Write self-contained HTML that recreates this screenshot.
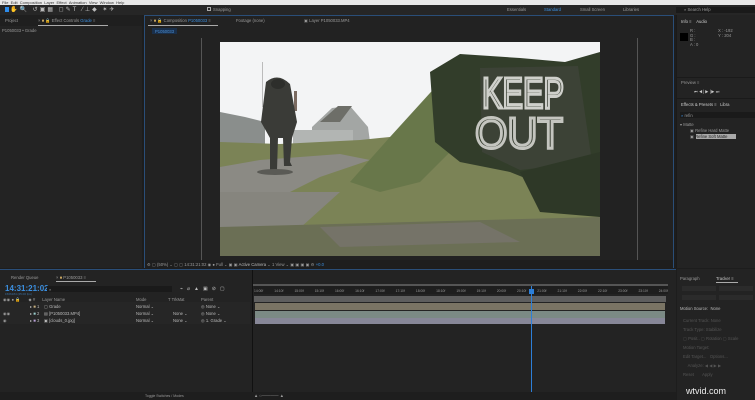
<!DOCTYPE html>
<html><head><style>
*{margin:0;padding:0;box-sizing:border-box}
body{width:755px;height:400px;background:#1d1d1d;font-family:"Liberation Sans",sans-serif;font-size:4px;color:#a0a0a0;position:relative;overflow:hidden}
.a{position:absolute}
.t{position:absolute;white-space:nowrap;font-size:4.2px;color:#9a9a9a}
.rl{position:absolute;left:254px;top:289px;width:414px;display:flex;justify-content:space-between;font-size:3.3px;color:#999}
</style></head><body>
<div class="a" style="left:0;top:0;width:755px;height:5px;background:#e8e8e8"></div>
<div class="t" style="left:2px;top:0;color:#333;font-size:4px">File&nbsp;&nbsp;Edit&nbsp;&nbsp;Composition&nbsp;&nbsp;Layer&nbsp;&nbsp;Effect&nbsp;&nbsp;Animation&nbsp;&nbsp;View&nbsp;&nbsp;Window&nbsp;&nbsp;Help</div>
<div class="a" style="left:0;top:5px;width:755px;height:10px;background:#262626"></div>
<div class="t" style="left:5px;top:6px;color:#bbb;font-size:6px;letter-spacing:2px">▸✋🔍 ↺▣▦ ◻✎T ⁄⊥◆ ✶✈</div>
<div class="a" style="left:5px;top:7px;width:4px;height:5px;background:#2d8ceb"></div>
<div class="a" style="left:207px;top:7px;width:4px;height:4px;border:1px solid #aaa"></div>
<div class="t" style="left:213px;top:7px">Snapping</div>
<div class="t" style="left:507px;top:7px">Essentials</div>
<div class="t" style="left:544px;top:7px;color:#3b8fe0">Standard</div>
<div class="t" style="left:580px;top:7px">Small Screen</div>
<div class="t" style="left:623px;top:7px">Libraries</div>
<div class="a" style="left:676px;top:7px;width:79px;height:6px;background:#1a1a1a"></div>
<div class="t" style="left:684px;top:7px">⌕ Search Help</div>
<div class="a" style="left:0;top:15px;width:142px;height:253px;background:#232323"></div>
<div class="a" style="left:0;top:15px;width:142px;height:11px;background:#1f1f1f"></div>
<div class="t" style="left:5px;top:18px">Project</div>
<div class="t" style="left:38px;top:18px">× <span style="color:#c8a560">■</span> 🔒 Effect Controls <span style="color:#3b8fe0">Grade</span> ≡</div>
<div class="a" style="left:38px;top:25px;width:70px;height:1px;background:#aaa"></div>
<div class="t" style="left:2px;top:28px">P1050033 • Grade</div>
<div class="a" style="left:144px;top:15px;width:530px;height:253px;background:#222;border:1px solid #2a4e78"></div>
<div class="t" style="left:150px;top:18px">× <span style="color:#c8a560">■</span> 🔒 Composition <span style="color:#3b8fe0">P1050033</span> ≡</div>
<div class="a" style="left:148px;top:25px;width:70px;height:1px;background:#aaa"></div>
<div class="t" style="left:236px;top:18px">Footage (none)</div>
<div class="t" style="left:304px;top:18px">▣ Layer P1050033.MP4</div>
<div class="a" style="left:152px;top:28px;width:25px;height:6px;background:#1a2f4a"></div>
<div class="t" style="left:155px;top:29px;color:#4a90d8">P1050033</div>
<div class="a" style="left:201px;top:38px;width:1px;height:222px;background:#555"></div>
<div class="a" style="left:637px;top:38px;width:1px;height:222px;background:#555"></div>
<svg class="a" style="left:220px;top:42px" width="380" height="214" viewBox="0 0 380 214">
<rect width="380" height="214" fill="#f3f4f5"/>
<polygon points="0,70 25,75 45,80 45,105 0,108" fill="#8a8e8c"/>
<polygon points="92,85 112,66 130,64 148,85 150,100 92,103" fill="#a3a6a4"/>
<polygon points="100,80 118,64 132,64 120,80" fill="#6d6e68"/>
<rect x="73" y="88" width="60" height="16" fill="#b2b5b3"/>
<rect x="74" y="49" width="3" height="20" fill="#7a6a60"/>
<rect x="42" y="20" width="1" height="45" fill="#bbb"/>
<polygon points="0,100 60,102 140,98 200,92 212,80 380,70 380,214 0,214" fill="#7b8356"/>
<polygon points="0,125 40,118 120,112 150,118 100,135 40,165 0,175" fill="#8b8a84"/>
<polygon points="0,150 120,150 70,195 0,200" fill="#86857e"/>
<polygon points="0,185 380,175 380,214 0,214" fill="#6b6f55"/>
<polygon points="100,185 260,180 300,200 120,205" fill="#757368"/>
<polygon points="170,95 220,40 230,110 200,140 160,150 130,140" fill="#68774a"/>
<polygon points="210,30 240,12 300,16 345,20 380,10 380,150 340,150 290,130 240,120 215,100" fill="#323d2a"/>
<polygon points="260,26 358,24 372,120 300,128 262,110" fill="#3c4236"/>
<polygon points="300,130 380,110 380,175 320,170" fill="#2e3827"/>
<text x="262" y="66" font-size="44" fill="none" stroke="#cfd0cb" stroke-width="3" font-family="Liberation Sans" textLength="82" lengthAdjust="spacingAndGlyphs">KEEP</text>
<text x="255" y="106" font-size="44" fill="none" stroke="#c4c5bf" stroke-width="3" font-family="Liberation Sans" textLength="88" lengthAdjust="spacingAndGlyphs">OUT</text>
<path d="M46,40 Q58,30 70,42 L77,80 L72,96 L70,120 L72,124 L64,124 L63,96 L58,96 L57,128 L50,128 L50,96 L41,80 Z" fill="#3a3b37"/>
<ellipse cx="58" cy="42" rx="7" ry="5" fill="#2d2e2b"/>
<ellipse cx="55" cy="130" rx="18" ry="3" fill="#5a5a55"/>
</svg>
<div class="a" style="left:145px;top:260px;width:528px;height:8px;background:#1e1e1e"></div>
<div class="t" style="left:147px;top:262px">⚙ ▢ (50%) ⌄ ▢ ▢ 14:31:21:02 ◉ ● Full ⌄ ▣ ▣ <span style="color:#bbb">Active Camera</span> ⌄ 1 View ⌄ ▣ ▣ ▣ ▣ ⚙ <span style="color:#3b8fe0">+0.0</span></div>
<div class="a" style="left:676px;top:15px;width:79px;height:253px;background:#232323;border-left:1px solid #1a1a1a"></div>
<div class="t" style="left:681px;top:19px;color:#ccc">Info ≡&nbsp;&nbsp;&nbsp;&nbsp;Audio</div>
<div class="a" style="left:680px;top:33px;width:8px;height:8px;background:#000"></div>
<div class="t" style="left:690px;top:29px;line-height:4.5px">R :<br>G :<br>B :<br>A : 0</div>
<div class="t" style="left:718px;top:29px;line-height:4.5px">X : -192<br>Y : 204</div>
<div class="a" style="left:676px;top:77px;width:79px;height:1px;background:#1a1a1a"></div>
<div class="t" style="left:681px;top:80px">Preview ≡</div>
<div class="t" style="left:694px;top:89px;color:#ccc">⏮ ◀| ▶ |▶ ⏭</div>
<div class="a" style="left:676px;top:98px;width:79px;height:1px;background:#1a1a1a"></div>
<div class="t" style="left:681px;top:102px;color:#ccc">Effects &amp; Presets ≡&nbsp;&nbsp;&nbsp;Libra</div>
<div class="a" style="left:680px;top:112px;width:75px;height:6px;background:#1a1a1a"></div>
<div class="t" style="left:681px;top:113px"><span style="color:#3b8fe0">⌕</span> refin</div>
<div class="t" style="left:680px;top:122px">▾ Matte</div>
<div class="t" style="left:690px;top:128px">▣ Refine Hard Matte</div>
<div class="a" style="left:696px;top:134px;width:40px;height:5px;background:#a9a9a9"></div>
<div class="t" style="left:690px;top:134px">▣ <span style="color:#222">Refine Soft Matte</span></div>
<div class="a" style="left:0;top:269px;width:676px;height:131px;background:#232323;border-top:1px solid #2a4e78"></div>
<div class="t" style="left:11px;top:275px">Render Queue</div>
<div class="t" style="left:56px;top:275px">× <span style="color:#c8a560">■</span> P1050033 ≡</div>
<div class="a" style="left:56px;top:281px;width:40px;height:1px;background:#aaa"></div>
<div class="t" style="left:5px;top:284px;font-size:8px;color:#3b8fe0;font-weight:bold">14:31:21:02</div>
<div class="t" style="left:5px;top:292px;font-size:3px;color:#3b6fa0">1566184 (25.00 fps)</div>
<div class="a" style="left:47px;top:286px;width:125px;height:6px;background:#1a1a1a"></div>
<div class="t" style="left:49px;top:287px">⌕</div>
<div class="t" style="left:180px;top:286px;color:#bbb;font-size:5px;letter-spacing:4px">⌁⌀▲▣⊘▢</div>
<div class="t" style="left:3px;top:297px">◉◉ ● 🔒&nbsp;&nbsp;&nbsp;&nbsp;&nbsp;&nbsp;&nbsp;◆ #&nbsp;&nbsp;&nbsp;&nbsp;&nbsp;&nbsp;Layer Name</div>
<div class="t" style="left:136px;top:297px">Mode</div><div class="t" style="left:168px;top:297px">T TrkMat</div><div class="t" style="left:201px;top:297px">Parent</div>
<div class="a" style="left:0;top:302px;width:250px;height:22px;background:#262626"></div>
<div class="t" style="left:3px;top:304px;line-height:6.8px">&nbsp;<br>◉◉<br>◉</div>
<div class="t" style="left:30px;top:304px;line-height:6.8px;color:#bbb">▸ <span style="color:#c8b080">■</span> 1&nbsp;&nbsp;&nbsp;&nbsp;▢ Grade<br>▸ <span style="color:#9cc">■</span> 2&nbsp;&nbsp;&nbsp;&nbsp;▤ [P1050033.MP4]<br>▸ <span style="color:#b9a0d8">■</span> 3&nbsp;&nbsp;&nbsp;&nbsp;▣ [clouds_0.jpg]</div>
<div class="t" style="left:136px;top:304px;line-height:6.8px;color:#bbb">Normal ⌄<br>Normal ⌄<br>Normal ⌄</div>
<div class="t" style="left:173px;top:304px;line-height:6.8px;color:#bbb"><br>None ⌄<br>None ⌄</div>
<div class="t" style="left:201px;top:304px;line-height:6.8px;color:#bbb">◎ None ⌄<br>◎ None ⌄<br>◎ 1. Grade ⌄</div>
<div class="a" style="left:252px;top:270px;width:1px;height:122px;background:#111"></div>
<div class="a" style="left:253px;top:284px;width:415px;height:2px;background:#555"></div>
<div class="a" style="left:254px;top:286px;width:414px;height:8px;background:#1e1e1e"></div>
<div class="rl"><span>14:00f</span><span>14:10f</span><span>15:00f</span><span>15:10f</span><span>16:00f</span><span>16:10f</span><span>17:00f</span><span>17:10f</span><span>18:00f</span><span>18:10f</span><span>19:00f</span><span>19:10f</span><span>20:00f</span><span>20:10f</span><span>21:00f</span><span>21:10f</span><span>22:00f</span><span>22:10f</span><span>23:00f</span><span>23:10f</span><span>24:00f</span></div>
<div class="a" style="left:254px;top:296px;width:412px;height:6px;background:#5e5e5e"></div>
<div class="a" style="left:255px;top:303px;width:410px;height:7px;background:#7a7464"></div>
<div class="a" style="left:255px;top:311px;width:410px;height:7px;background:#7b8a85"></div>
<div class="a" style="left:255px;top:318px;width:410px;height:6px;background:#878798"></div>
<div class="a" style="left:531px;top:286px;width:1px;height:110px;background:#2d7fd8"></div>
<div class="a" style="left:529px;top:289px;width:5px;height:5px;background:#2d7fd8"></div>
<div class="a" style="left:0;top:392px;width:676px;height:8px;background:#1e1e1e"></div>
<div class="t" style="left:145px;top:394px;font-size:3.5px">Toggle Switches / Modes</div>
<div class="t" style="left:254px;top:393px">▲ ○———— ▲</div>
<div class="a" style="left:677px;top:269px;width:78px;height:131px;background:#232323"></div>
<div class="t" style="left:680px;top:276px">Paragraph</div>
<div class="t" style="left:716px;top:276px;color:#ccc">Tracker ≡</div>
<div class="a" style="left:716px;top:282px;width:22px;height:1px;background:#aaa"></div>
<div class="a" style="left:682px;top:286px;width:34px;height:5px;background:#2b2b2b"></div>
<div class="a" style="left:719px;top:286px;width:34px;height:5px;background:#2b2b2b"></div>
<div class="a" style="left:682px;top:295px;width:34px;height:5px;background:#2b2b2b"></div>
<div class="a" style="left:719px;top:295px;width:34px;height:5px;background:#2b2b2b"></div>
<div class="t" style="left:680px;top:306px;color:#bbb">Motion Source:&nbsp;&nbsp;None</div>
<div class="t" style="left:683px;top:316px;color:#555;line-height:9px">Current Track: None<br>Track Type: Stabilize<br>▢ Posit.. ▢ Rotation ▢ Scale<br>Motion Target:<br>Edit Target... &nbsp;&nbsp;Options...<br>&nbsp;&nbsp;&nbsp;&nbsp;Analyze: ◀ ◀ ▶ ▶<br>Reset &nbsp;&nbsp;&nbsp;&nbsp;&nbsp;&nbsp;Apply</div>
<div class="t" style="left:686px;top:386px;font-size:9px;color:#eee">wtvid.com</div>
</body></html>
